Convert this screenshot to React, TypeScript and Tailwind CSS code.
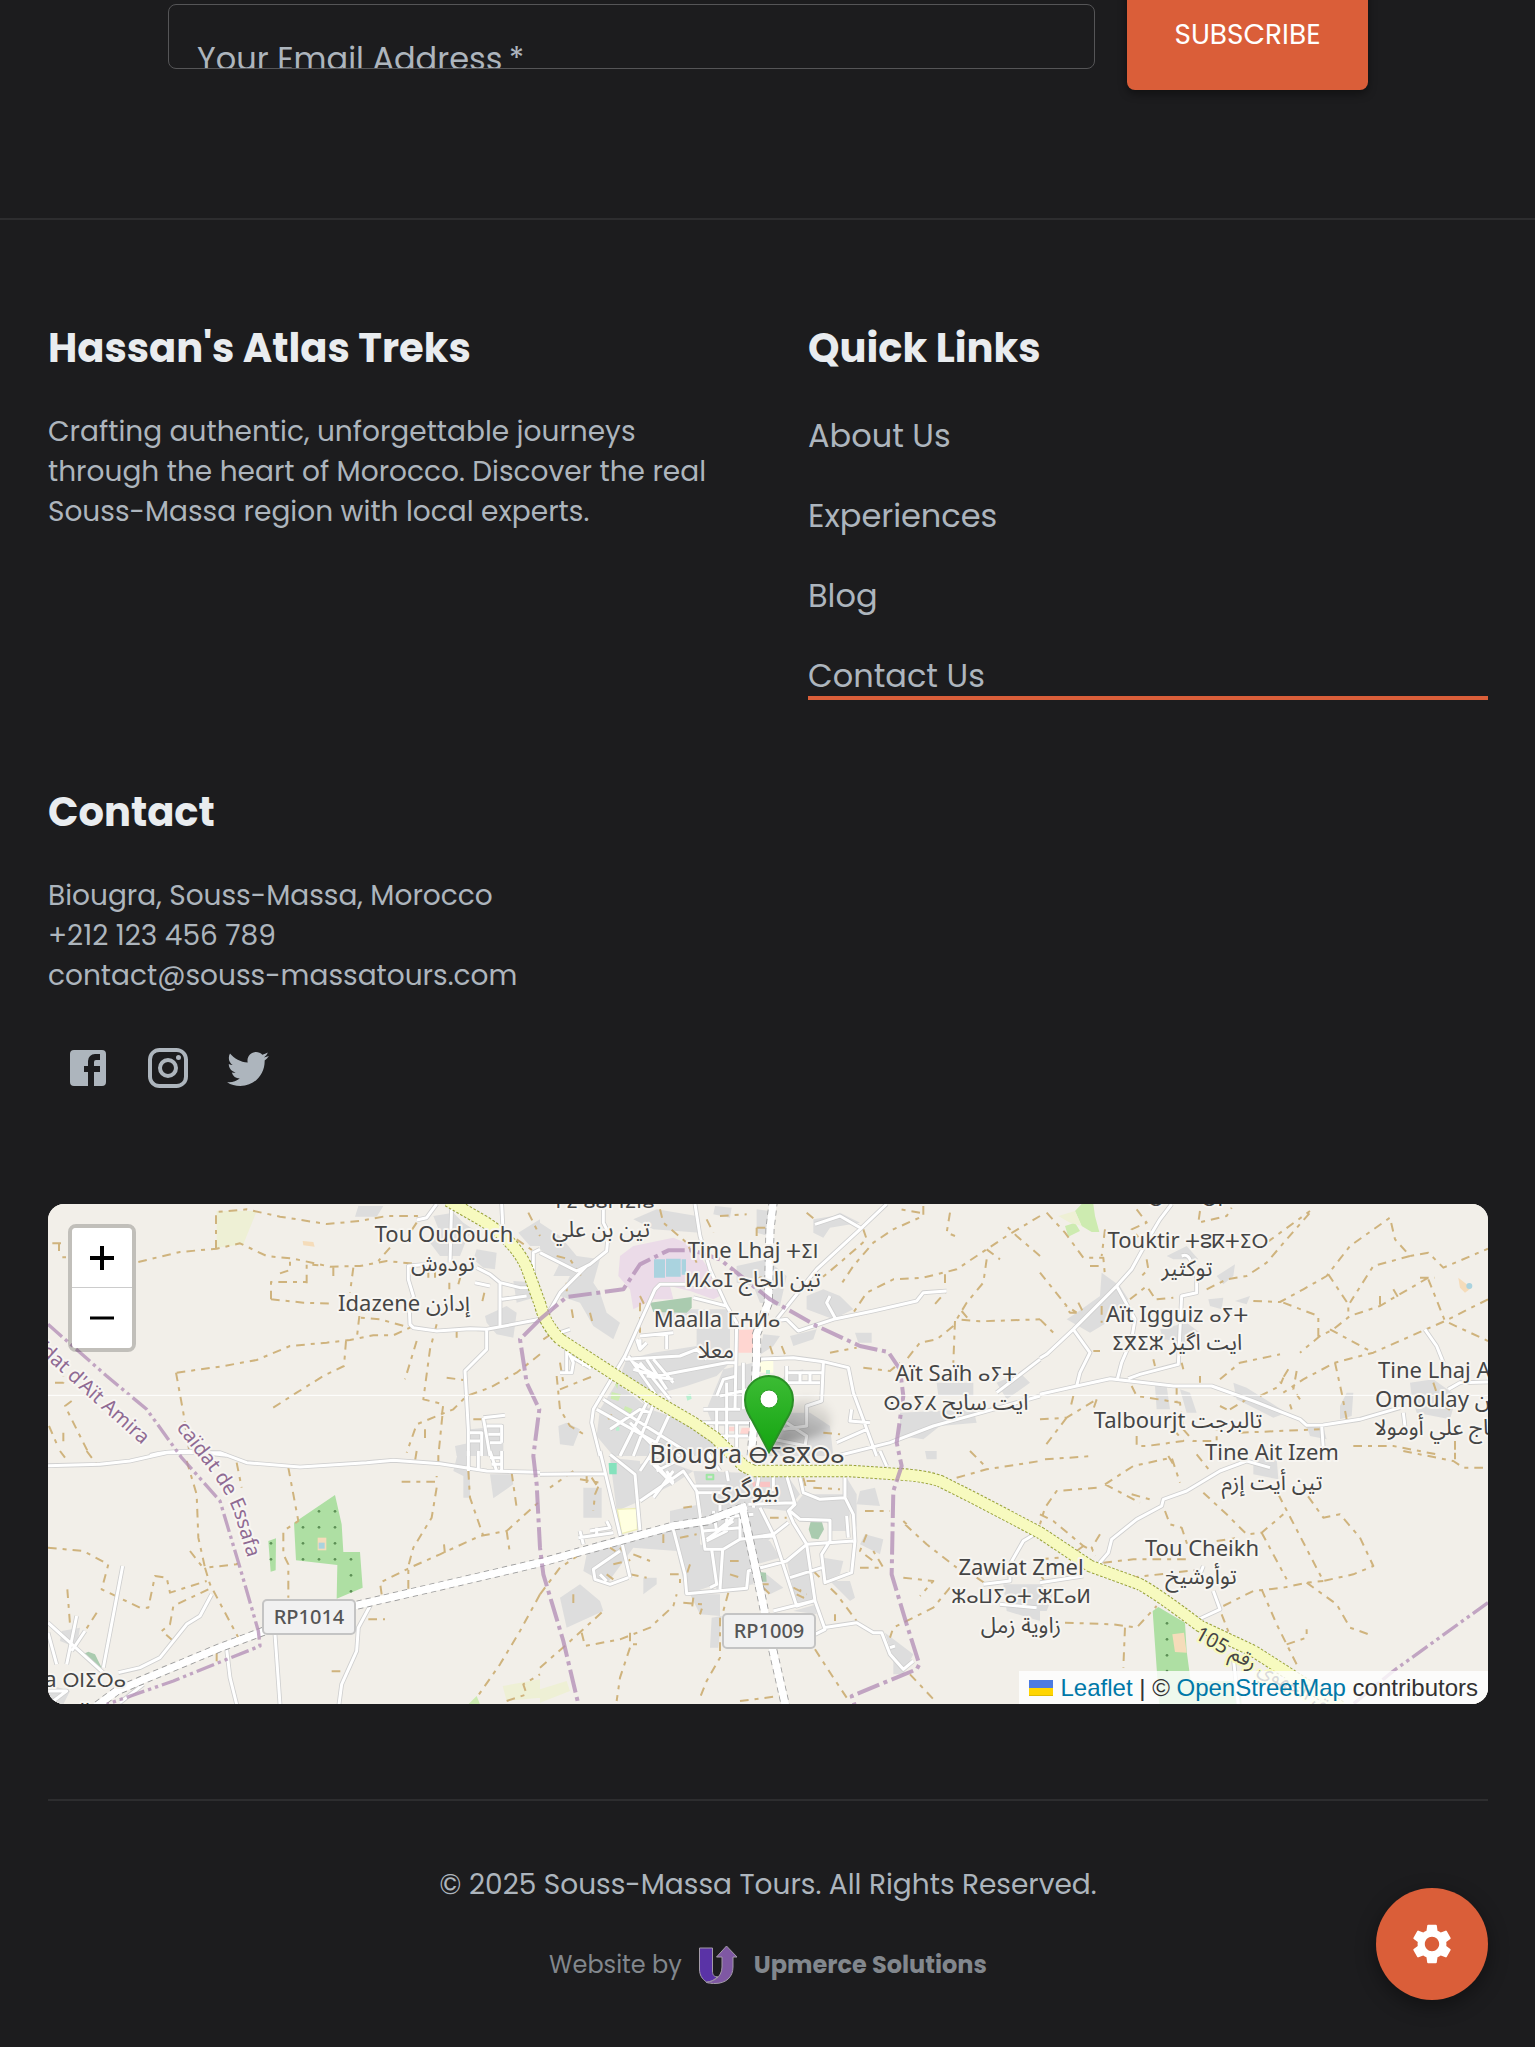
import React from "react";
import { MdSettings } from "react-icons/md";

type Tile = {
  at: string;
  urban: string;
  tracks: string;
  roads: string;
};

/* The drawing grid is three units per map pixel; each tile has its own origin. */
const tiles: Tile[] = [
  {
    at: "translate(-24 -24)",
    urban:
      "M945 62L955 30H1030L1010 62ZM1180 60L1240 50L1270 80L1300 100L1280 130L1260 180L1200 180L1170 140L1200 110ZM1310 160L1370 170L1365 220L1330 215L1300 190ZM1435 110L1500 70V150L1470 150ZM1335 360L1400 330L1430 350L1420 425L1370 415L1340 380ZM1245 750L1290 740V700L1390 690V780H1250ZM1420 255L1500 260V300L1430 320Z",
    tracks:
      "M528 158V48L620 40L720 62L860 84L960 75L1040 60L1140 60M295 198L420 168L530 158L600 142L680 180L760 188L870 212L960 210L1040 195L1140 205M37 142H75M57 142V165M67 184H78M1130 80L1110 110M1050 155L1015 195M720 232L750 222V190M800 262V205L835 208M693 310V258L800 258M693 310L790 320L870 323M880 240V215M940 215L930 290M410 530L540 512L650 492L750 450L860 440L930 432L1000 418H1060L1110 395L1020 370L960 365M958 360L950 430M918 435L912 510L850 540L770 590L695 638M408 530L430 650L450 780M1130 435L1095 550M1190 385L1170 460L1150 610L1210 625L1205 660M1500 475L1430 530L1350 575L1280 600L1240 640L1130 685L1100 770M1220 545L1270 552M1333 290L1325 325M1250 400V425M45 560H70V540M95 615L75 630L145 770M27 690L55 755M70 710V750M1155 700V735M1207 660L1195 780M1300 670H1325M1228 260V280M1262 240L1255 265M1165 225V245M1185 225V245M1465 50L1490 100L1500 120M1430 130L1480 165",
    roads:
      "M1190 24L1160 65L1130 72M1235 24L1230 200M1160 205L1105 210V250L1120 300L1108 340L1110 385L1120 395L1190 405L1290 398L1340 400L1420 385L1500 370M1340 400V460L1275 525L1285 700V780M1310 215L1350 235L1380 260L1440 275H1480M1380 260V390M1305 260L1350 270M1385 310L1460 300M1480 270V170L1500 160M1385 24L1390 120M1330 665L1395 658M1330 665L1350 780M1340 690H1385V740M1290 710H1325V780M1345 715H1380M1350 740H1385M1290 735H1320M330 778Q380 765 450 766L560 778",
  },
  {
    at: "translate(1476 -24)",
    urban:
      "M0 80L60 120L110 180L180 190L160 260L180 290L200 350L240 380L220 430L160 390L120 320L60 300L90 240L40 240L60 200L0 160ZM280 70L350 40L470 60L480 110L340 100ZM525 30L575 35L570 65L520 55ZM650 40L690 45L685 120L650 110ZM590 210L680 190L740 240L720 330L660 320L640 270L590 260ZM820 70L880 60L900 50L960 80L870 95L850 125L820 110ZM800 300L850 280L900 300L940 340L880 370L800 340ZM750 420L830 400L820 430L760 450ZM670 415L720 420L700 450L655 480ZM945 410H995V440H955ZM360 340L570 340V500L530 540L440 570L330 600L240 540L260 490L340 470L470 450V400L350 390ZM180 640L230 560L330 640L480 690L560 740V780H220L170 720ZM55 690L80 680L120 700L100 750L60 745ZM550 520L640 500V690H520L500 640ZM740 530L790 520L780 560L720 560ZM740 650L810 650L870 690L880 780H680L700 700ZM1190 560H1300V600H1195ZM1370 560L1440 530L1470 560L1400 610ZM1080 650L1300 640L1310 680L1200 690L1150 730L1080 720Z",
    tracks:
      "M360 40L370 80L440 140L470 200M50 180L90 190L130 250M80 260V300M95 340L100 370M150 350L160 390M540 60L620 55M650 95H680M650 95V120M800 50L830 75M970 100L980 130L900 200L840 250M1230 50L1220 110L1245 120M1150 30V60L1060 100L1000 140L940 210L900 270M1140 50L1080 40M1500 60L1400 120L1340 160L1250 220L1150 245L1060 250L980 290L940 350M1500 180L1430 120L1400 90M1340 160L1380 190M1340 190L1330 260L1280 320L1250 370L1320 376L1500 370M1215 235V290L1180 330M1265 345L1290 375M1245 375L1240 500M1240 390L1190 430L1140 440L1100 490M870 470L950 455M970 515L1050 525L1080 500M50 540L60 640L90 690L140 720M60 580L160 540M10 430L40 410M60 500L70 560M690 450L700 480M725 450L735 475M300 320V410M205 670L215 655M640 250L680 240M300 300L320 340M770 690L790 720M850 710L900 715M500 70L520 110",
    roads:
      "M0 170L110 225L150 205L200 165L205 110L190 80V24M140 210L60 290L20 360M465 24L480 120L510 220L560 330L590 380L585 640M520 265L360 265L345 280L255 480L160 640L155 680L180 780M460 305L560 330M1040 24L960 100L830 220L710 370M825 85L900 60L960 95M700 375L740 370L775 405L880 370L1000 345L1130 315L1150 290L1220 285M870 300L860 320L885 365M640 490L760 485L850 497L925 515L940 590L1010 780M1500 490L1370 590M1500 600L1360 640L1180 690L1050 740L890 780M850 500L845 615L800 630V690L730 700M745 530H850M780 530V560H840M740 510V580M720 560H840M810 530V560M255 490L420 480L470 460L500 490M265 480L350 600M300 500L390 610M240 540L320 620L240 780M190 610L460 780M350 540L560 500H585M480 680H640M490 640H600M530 640V780M560 560V690M350 600L280 780M400 630L330 780M610 500V640M170 640L420 780M90 400L60 410L100 500L95 530H60M80 440V530M90 480L150 515M150 480V520M130 480V510M300 420L400 410M290 430L300 460M300 430V460L320 440M935 640L930 675L990 680M890 740L980 700M320 490L380 580M340 490L400 560M280 500L350 540L280 520M320 540L400 550M270 680L370 780M210 700L300 640L330 650M530 600L550 550L590 540M480 700L530 720H640M560 690V780M590 680V780M380 410V460M540 600L630 580M740 680L800 720L790 780M700 730L800 750",
  },
  {
    at: "translate(2976 -24)",
    urban:
      "M185 230L240 270L265 310L200 380L150 410L80 370L110 350L180 300ZM380 180L440 150L475 190L400 190ZM530 240L585 205L580 240L550 265ZM505 310L550 305L545 340L510 330ZM585 315L630 300L620 325ZM360 400L440 380L480 410L440 440L370 430ZM345 570H380L390 640H350ZM420 580L450 590L470 650H440ZM580 560L620 575L740 650L700 665L590 610ZM800 690L850 695L860 730L810 720ZM900 630L920 590H940L935 660L900 670ZM1110 560L1180 550L1250 600L1230 670L1130 650L1115 600Z",
    tracks:
      "M20 50L75 110L130 185L190 185L195 240M195 100L185 180M150 210H190M0 230L80 330L110 350M290 40L320 80L275 100L310 140M480 45L475 80L560 60L575 35M680 140L810 45M500 280L560 250L620 240L680 200L740 130L810 50M320 190L325 220L300 245M270 310L320 270L340 300M350 310L400 305M640 315L720 318L790 280L860 240L930 150L1050 65L1065 130L1110 180L1165 170L1210 215L1344 158M1110 180L1000 210L930 320M865 235L925 325V360M1165 245L1070 300L1020 330L930 360L880 400L840 420L780 470M1060 280L1075 305M1020 300V330M1165 250L1215 375L1344 435M1140 245L1185 245M1344 310L1215 375L1000 470L885 500L790 550L730 590M730 320L835 360V430M870 400L990 465M885 500L905 590L920 670M540 550L600 500L720 475M745 520L720 560M770 525L760 580L780 610M480 540V560M110 350H90L75 330M115 320L130 350M185 330V380M0 370L40 410M340 490L345 510M425 500L430 520M0 670L80 665L170 610M80 665L15 750M170 610L160 640M275 570L290 600L420 620L430 700M410 570V620M290 720V750H320L430 735L400 700M430 700L460 735H530V690M600 710L840 700M660 600L720 570L730 545M750 625L755 640M570 640L620 610M540 630L560 640M940 750L1060 750L1190 775M1245 735V780M1180 560L1200 620L1240 650M100 600L90 640M160 465H180",
    roads:
      "M395 24L360 70L330 120L275 220L230 270L100 400L20 475L0 487M230 270L285 370L275 430L245 500L232 550M100 400L150 470L120 530L110 570M0 595L110 570L210 548L400 570H515L640 615L780 670L800 688L850 687L960 670L1080 635M470 230V290L425 300L420 400L415 505L300 535L265 548M425 180Q450 170 455 210M845 687L850 760M1155 400L1190 450L1210 500M1225 580L1260 560L1344 558M1090 650L1095 690",
  },
  {
    at: "translate(-24 741)",
    urban:
      "M1255 0H1290V140H1270V75L1240 60ZM1350 70H1415L1420 100L1360 142ZM65 540L120 530L110 590L60 570ZM24 700L90 720L70 760H24Z",
    tracks:
      "M590 35L605 110M745 50L775 210L730 240V310L745 340V440M440 30L470 130L475 260L495 350L590 340L598 320M495 350L510 400L595 560M450 300L485 345M24 290L130 300L205 340L185 415L300 470H325L345 375L380 380L390 425L500 390M505 415L400 465L390 520L365 540L400 570M82 415L90 520M170 485L135 540M1085 92H1190V75M1190 110L1175 200L1120 290L1105 345V415M1025 430L1020 395L1110 350L1200 310L1320 255L1400 240L1500 150M1285 60L1290 140L1330 255M1415 65L1430 170M1400 240L1408 295M1212 280L1215 310M985 505H1035M875 661H905M1500 430L1440 540L1380 640L1310 740M1400 750L1460 730L1450 700L1500 670M530 605V635M60 0L75 20M140 0L170 40M1130 0L1125 30M1195 15V40",
    roads:
      "M24 44L180 40L270 30L380 5H540L620 35L780 48L980 35L1060 28L1200 38L1340 60L1500 64M248 345L190 650M24 515L190 665M110 495L80 640M135 540L95 600M24 545L50 640M515 430L480 495L440 520L360 620L300 650L235 665M560 595L570 680L590 760M705 550L720 760M990 465L955 530L950 600L905 700L897 760M24 720H80L40 750M310 700L240 755M1285 0V60M1315 0V60M1350 0L1370 60M1385 0V60M1350 20H1385M1355 40H1385",
  },
  {
    at: "translate(1476 741)",
    urban:
      "M210 20L300 30V150L230 180ZM390 180L480 160V280L530 300V400L440 430L410 300L280 290L200 400L130 360L140 310L180 270L390 230ZM300 40L350 20L460 60L400 100L300 150ZM460 60L740 70L780 130L740 180L660 170L700 250L640 330L640 400L530 420L500 290L490 200ZM790 130H915L930 190L920 240L870 240L860 210H780L750 180ZM920 80L950 130V230L920 130ZM740 330L800 290L830 460L770 460ZM640 270L690 270L720 320L650 340ZM850 320L910 330L900 370L855 390ZM760 480L830 460V490ZM960 120L1005 110L1020 165L950 160ZM975 250L1030 265L1020 310L960 280ZM60 440L120 400L180 450L190 480L80 530ZM130 110H185V200H130ZM450 430H540V495L480 490ZM515 500L545 495L535 590H510ZM1035 545L1120 610L1090 670H1060V620ZM870 390H930L945 440L930 450ZM1390 400H1500V510L1400 480ZM310 380H350V400L310 430ZM640 400L680 370L730 410L690 430ZM1155 0H1190V25H1160Z",
    tracks:
      "M120 85L180 95L165 130L160 180M140 70V100M155 80L175 110M100 60L30 110M0 650L80 580L190 480M270 545V580H295M125 545L135 585L240 565L330 530L400 465L410 430M270 590L240 680L230 750M540 500V620L500 690L480 740M825 595L880 680L920 740M600 750L720 735M820 360L890 430L950 510M885 490V510M980 250L960 300L1000 330M960 350H1030L1000 300M975 180H1050M1095 220L1160 280L1250 350M1090 380L1180 390L1140 435M1230 410L1180 470L1060 530L1050 560M1110 670L1190 755M1250 80L1340 55L1500 30M1290 0L1340 50M570 330H600M570 370L600 380M690 200H740M790 80L800 120M820 110L900 115M800 90H840M0 430L60 350L120 310M210 290L240 310M220 340L260 330M280 310L330 330M200 370L220 385M240 290L270 330M270 370L320 380M370 250V290M420 260L470 250M450 340L440 370M390 370H420V400M430 455L490 460L480 490M460 440L455 480M100 430V460M760 410L800 430M770 430L790 440L780 415M565 425L550 480M660 400H690M670 410L690 430M430 170L470 165M1310 380L1340 400M1100 220L1090 210",
    roads:
      "M0 70L195 68M180 0L240 250L270 380M210 10L285 70L300 240M240 300L160 355L165 385L210 400L265 380M300 150L380 95L430 60L470 120L495 295H550L600 265L700 250L745 215M400 235L435 370L440 428L620 412L625 360L740 330L800 280L940 270M515 295L530 400L510 410M548 295L540 415M660 170L700 250L770 465L820 450L700 480M740 75L765 160L745 180L760 215L800 280L825 450L855 535L825 550M780 80L790 125L840 145L915 140V80M915 140L940 190L945 270L935 365L855 395L845 310L870 270V208L780 205L750 180M625 160L760 155M850 530L950 515L1000 545H1025L1050 610L1090 655L1120 630M750 380L845 350M490 240L600 230M520 180L530 240L580 200M380 60L400 95M340 40L380 80M460 105H560M470 125H550M1500 240L1450 270L1410 340M1330 400L1410 390V370M920 195L925 260M1020 0L1040 45M120 240L130 280M150 240L210 230L200 210M115 260L220 245M170 250V230M560 60L565 90M500 0L540 60M1380 460L1490 470M300 60L340 0M340 140L400 60M330 20L400 100M350 60L430 20M430 60L460 105M500 265L580 210M500 270L560 240V200M600 200V265M540 150V200M640 170L660 60M700 70V120M180 370L200 390M490 205L640 190M625 260L700 255M1050 590L1065 585",
  },
  {
    at: "translate(2976 741)",
    urban: "M640 20H710L715 85L640 70ZM0 400L40 430L20 480H0Z",
    tracks:
      "M15 25L160 15M195 100L280 45L395 20L420 95M385 15L400 40M195 100L300 155M275 130L330 145M170 110L50 120L15 170L0 220M0 190L40 210L130 285L160 300M110 300L130 285M180 250L155 290L165 315M375 180L390 220L425 230L445 290M470 10L510 60M490 125L560 190L620 250L665 245L730 190M665 245L740 385M715 130L850 390L940 370L1000 345L960 260L900 190L850 200L800 130M550 465L640 420L730 410L800 395L850 390M800 395L890 460L930 530L1000 555M665 415L710 520L750 600L770 640M740 580L800 560V535M190 335L280 325L440 325M270 380L490 355M75 515L220 520L290 530L350 465M255 530L250 650M545 490L580 580M1090 0L1240 30L1270 50L1330 50M1245 5V25M530 270L600 260M0 325L60 320M0 370L20 400",
    roads:
      "M690 50L620 30L540 60L440 120L370 145L365 165L290 205L215 265L205 305L175 340M130 375L0 395M490 345L480 370M520 420L540 475L465 510M580 620L595 760",
  },
];

const highway =
  "M1200 -10L1306 51Q1400 110 1436 190L1476 300Q1490 360 1536 406L1706 516L1816 586L1936 656L2000 700L2086 785L2116 801H2406L2556 811Q2630 815 2676 831L2776 881L2976 986L3126 1086L3276 1141Q3330 1170 3456 1266L3616 1341L3880 1510";
const secondary =
  "M126 1521L206 1461L276 1431L516 1331L676 1271L916 1206L1156 1151L1476 1076L1876 966L1976 951L2096 906M2176 -10L2166 76L2161 296L2126 390V456L2116 676L2106 800M2081 900L2116 1061L2166 1301L2216 1520";
const townBorder =
  "M1476 346L1416 406L1436 536L1474 616L1456 756L1466 841L1476 1031L1486 1111L1546 1311L1591 1500M1476 346L1556 279L1726 256L1776 181L1861 139H1936L2016 166L2166 286L2306 366L2436 426L2521 444L2556 496L2566 576L2546 716L2561 786L2536 861L2531 1111L2576 1261L2614 1381L2606 1396L2411 1476L2421 1506";
const provinceBorder =
  "M0 361L176 516L296 616L400 760L516 891L576 1091L631 1281L636 1326L376 1431L176 1501M4320 1196L4036 1401L3916 1500";

type Label = { x: number; y: number; t: string; a?: "start" | "middle" | "end" };

const labels: Label[] = [
  { x: 396, y: 38, t: "Tou Oudouch" },
  { x: 395, y: 67, t: "تودوش" },
  { x: 356, y: 107, t: "Idazene إدازن" },
  { x: 555, y: 4, t: "ⵜⵉ ⵓⵓⵏ ⵏⵉⵏⴻ" },
  { x: 553, y: 33, t: "تين بن علي" },
  { x: 705, y: 54, t: "Tine Lhaj ⵜⵉⵏ" },
  { x: 705, y: 83, t: "ⵍⵃⴰⵊ تين الحاج" },
  { x: 669, y: 123, t: "Maalla ⵎⵄⵍⴰ" },
  { x: 668, y: 154, t: "معلا" },
  { x: 908, y: 177, t: "Aït Saïh ⴰⵢⵜ" },
  { x: 908, y: 206, t: "ⵙⴰⵢⵃ ايت سايح" },
  { x: 1108, y: 2, t: "ⵙ" },
  { x: 1164, y: 2, t: "ⵔⵏ" },
  { x: 1140, y: 44, t: "Touktir ⵜⵓⴽⵜⵉⵔ" },
  { x: 1139, y: 72, t: "توكثير" },
  { x: 1129, y: 118, t: "Aït Igguiz ⴰⵢⵜ" },
  { x: 1129, y: 146, t: "ⵉⴳⵉⵣ ايت اگيز" },
  { x: 1130, y: 224, t: "Talbourjt تالبرجت" },
  { x: 1224, y: 256, t: "Tine Ait Izem" },
  { x: 1224, y: 286, t: "تين أيت إزم" },
  { x: 1330, y: 174, t: "Tine Lhaj Ali", a: "start" },
  { x: 1327, y: 203, t: "Omoulay تين", a: "start" },
  { x: 1326, y: 231, t: "الحاج علي أومولا", a: "start" },
  { x: 1154, y: 352, t: "Tou Cheikh" },
  { x: 1153, y: 380, t: "توأوشيخ" },
  { x: 973, y: 371, t: "Zawiat Zmel" },
  { x: 973, y: 399, t: "ⵣⴰⵡⵢⴰⵜ ⵣⵎⴰⵍ" },
  { x: 973, y: 429, t: "زاوية زمل" },
  { x: 78, y: 483, t: "Ouled Mira ⵔⵏⵉⵔⴰ", a: "end" },
  { x: 32, y: 515, t: "ال" },
];

const treeDots = [
  [837, 181], [885, 181], [789, 229], [837, 229], [885, 229], [789, 277], [885, 277],
  [789, 325], [837, 325], [885, 325], [933, 325], [933, 373], [933, 421], [693, 277], [693, 325],
];

/* Tifinagh glyphs are wide in the fallback face, so their runs are set smaller. */
function Bilingual({ text }: { text: string }) {
  return (
    <>
      {text.split(/([\u2D30-\u2D7F]+)/).map((part, i) =>
        i % 2 ? (
          <tspan key={i} className="text-[19px]">
            {part}
          </tspan>
        ) : (
          part
        ),
      )}
    </>
  );
}

function Layer({ pick, className }: { pick: "urban" | "tracks" | "roads"; className: string }) {
  return (
    <g className={className}>
      {tiles.map((t) => (
        <path key={t.at} transform={t.at} d={t[pick]} />
      ))}
    </g>
  );
}

function MapArt() {
  return (
    <svg
      viewBox="0 0 1440 500"
      preserveAspectRatio="xMidYMid slice"
      className="block h-full w-full"
      role="img"
      aria-label="Map of Biougra"
    >
      <defs>
        <linearGradient id="pin" x1="0" y1="0" x2="0" y2="1">
          <stop offset="0" stopColor="#3cbc34" />
          <stop offset="1" stopColor="#14a411" />
        </linearGradient>
        <linearGradient id="shade" x1="0" y1="1" x2="0.6" y2="0">
          <stop offset="0" stopColor="#000" stopOpacity="0.45" />
          <stop offset="1" stopColor="#000" stopOpacity="0.04" />
        </linearGradient>
        <filter id="soft" x="-30%" y="-30%" width="160%" height="160%">
          <feGaussianBlur stdDeviation="4" />
        </filter>
        <path id="essafa" d="M128 224L158 262Q180 290 187 312L202 362" />
      </defs>
      <rect width="1440" height="500" fill="#f2efe9" />
      <g transform="scale(0.33333)" fill="none" strokeLinejoin="round">
        <Layer pick="urban" className="fill-[#dddddd]" />
        <g transform="translate(-24 -24)">
          <path fill="#eef0d5" d="M530 45H650L610 145L530 155Z" />
          <path fill="#f5dcba" d="M788 135L820 138L824 152L790 148Z" />
        </g>
        <g transform="translate(1476 -24)">
          <path fill="#ebdbe8" d="M240 180L280 150L400 125L460 150L500 210L540 300L520 310L450 285L390 270L400 310L340 310L280 340L270 280L235 240Z" />
          <path fill="#aad3df" d="M342 190h33v55h-33zM378 188h44v54h-44zM425 190h13v46h-13z" />
          <path fill="#aacbaf" d="M330 320L455 303V335L440 350L340 348Z" />
          <path fill="#ffd6d1" d="M592 402L658 400L635 470H590ZM555 692H585V706H560ZM605 695H630V715H600Z" />
          <path fill="#ffffe5" d="M655 495H700V530H655Z" />
          <path fill="#cdebb0" d="M215 588L243 595L235 615L212 608ZM225 565L235 560L232 580ZM255 630L278 640L270 655L250 645Z" />
          <path fill="#b8f0cf" d="M438 598L452 594L455 608L442 614ZM678 522H690V534H678ZM228 692H238V704H228Z" />
        </g>
        <g transform="translate(2976 -24)">
          <path fill="#cdebb0" d="M105 45L125 24H160L165 60L178 108H155L125 90ZM75 90L105 80L120 105L85 122Z" />
          <path fill="#eef0d5" d="M55 60L105 45L125 90L90 80Z" />
          <path fill="#f5dcba" d="M1255 245L1280 265L1295 275L1275 290L1260 275Z" />
          <circle fill="#aad3df" cx="1288" cy="270" r="9" />
        </g>
        <g transform="translate(-24 741)">
          <path fill="#aedfa3" d="M885 132L905 220L910 303H960L968 410L890 443L892 342L768 328L762 215ZM685 270L708 262L707 358L692 362Z" />
          {treeDots.map(([x, y]) => (
            <circle key={`${x}-${y}`} cx={x} cy={y} r="4" fill="#5c8f55" />
          ))}
          <path fill="#f5dcba" d="M833 260h26v38h-26z" />
          <path fill="#aad3df" d="M836 275h18v18h-18z" />
          <path fill="#aacbaf" d="M128 610L145 602L165 610L185 650L170 655Z" />
          <path fill="#eef0d5" d="M1388 705L1500 685V740L1400 750ZM1500 715L1580 690L1590 720L1500 755Z" />
          <path fill="#cdebb0" d="M1285 760L1310 735L1320 760Z" />
        </g>
        <g transform="translate(1476 741)">
          <path fill="#ffffe0" stroke="#eeeeb8" strokeWidth="4" d="M232 175L292 172V235L245 248Z" />
          <path fill="#85e2bd" d="M206 36H230V70H208Z" />
          <path fill="#aacbaf" d="M812 212L845 210L852 235L835 265L815 262L806 235ZM655 362L678 365L680 392H660Z" />
          <path fill="#f9c4c4" d="M635 92H690V108H640Z" />
          <path stroke="#9fe6a3" strokeWidth="6" d="M500 71h20v14h-20z" />
        </g>
        <g transform="translate(2976 741)">
          <path fill="#aedfa3" d="M338 480L355 468L435 515L440 600L452 690L600 690L605 765H358Z" />
          <path fill="#f5dcba" d="M397 550L432 545L440 605L405 603Z" />
          {[517, 565, 613, 660].map((y) => (
            <circle key={y} cx="381" cy={y} r="4" fill="#5c8f55" />
          ))}
        </g>
        <Layer pick="tracks" className="stroke-[#cfb37d] stroke-[6] [stroke-dasharray:26_18_12_18]" />
        <Layer pick="roads" className="stroke-[#cfcfcf] stroke-[14]" />
        <Layer pick="roads" className="stroke-white stroke-[9]" />
        <path d={secondary} stroke="#9b9b9b" strokeWidth="27" strokeDasharray="16 12" />
        <path d={secondary} stroke="#fff" strokeWidth="22" />
        <path d={highway} stroke="#9aa33a" strokeWidth="38" strokeDasharray="8 5" />
        <path d={highway} stroke="#f7fabf" strokeWidth="32" />
        <path d={townBorder} stroke="#b08bb4" strokeOpacity="0.75" strokeWidth="12" strokeDasharray="70 14 12 14" />
        <path d={provinceBorder} stroke="#b08bb4" strokeOpacity="0.75" strokeWidth="10" strokeDasharray="56 12 10 12 10 12" />
        <path d="M0 574H4320" stroke="#fff" strokeWidth="3" />
      </g>

      <g className="fill-[#f1f1f1] stroke-[#c4c4c4] stroke-2">
        <rect x="215" y="396" width="92" height="34" rx="4" />
        <rect x="675" y="410" width="92" height="34" rx="4" />
      </g>
      <g className="fill-[#555] text-[20px] font-medium [font-family:'Noto_Sans',sans-serif]" textAnchor="middle">
        <text x="261" y="420">RP1014</text>
        <text x="721" y="434">RP1009</text>
      </g>
      <g
        className="fill-[#454545] stroke-[#f7f5f1] stroke-[4] text-[22px] [font-family:'Noto_Sans','Noto_Sans_Arabic','DejaVu_Sans',sans-serif] [paint-order:stroke]"
        strokeLinejoin="round"
      >
        {labels.map((l) => (
          <text key={`${l.x}-${l.y}`} x={l.x} y={l.y} textAnchor={l.a ?? "middle"}>
            <Bilingual text={l.t} />
          </text>
        ))}
        <g className="text-[25px]" textAnchor="middle">
          <text x="699" y="259">
            Biougra <tspan className="text-[22px]">ⴱⵢⵓⴳⵔⴰ</tspan>
          </text>
          <text x="698" y="293">بيوگرى</text>
        </g>
        <g className="fill-[#8f6a93] text-[20px]">
          <text transform="translate(94 241) rotate(42)" textAnchor="end">
            caïdat d'Aït Amira
          </text>
          <text>
            <textPath href="#essafa">caïdat de Essafa</textPath>
          </text>
        </g>
        <text transform="translate(1146 434) rotate(29)" className="stroke-[#f7fabf] text-[20px]">
          الطريق الجهوي رقم 105
        </text>
      </g>

      <path d="M722 246L738 208Q754 184 776 198Q790 214 776 230Z" fill="url(#shade)" filter="url(#soft)" />
      <path
        d="M721 172C707 172 697 183 697 196C697 205 701 211 705 218L721 248L737 218C741 211 745 205 745 196C745 183 735 172 721 172Z"
        fill="url(#pin)"
        stroke="#2a8f26"
        strokeWidth="2"
      />
      <circle cx="721" cy="195" r="9" fill="#fff" stroke="#2f9c2a" strokeWidth="1" />
    </svg>
  );
}

const social = [
  {
    name: "Facebook",
    d: "M5 3h14a2 2 0 0 1 2 2v14a2 2 0 0 1-2 2H5a2 2 0 0 1-2-2V5a2 2 0 0 1 2-2m13 2h-2.5A3.5 3.5 0 0 0 12 8.5V11h-2v3h2v7h3v-7h3v-3h-3V9a1 1 0 0 1 1-1h2V5z",
  },
  {
    name: "Instagram",
    d: "M7.8 2h8.4C19.4 2 22 4.6 22 7.8v8.4a5.8 5.8 0 0 1-5.8 5.8H7.8C4.6 22 2 19.4 2 16.2V7.8A5.8 5.8 0 0 1 7.8 2m-.2 2A3.6 3.6 0 0 0 4 7.6v8.8C4 18.39 5.61 20 7.6 20h8.8a3.6 3.6 0 0 0 3.6-3.6V7.6C20 5.61 18.39 4 16.4 4H7.6m9.65 1.5a1.25 1.25 0 0 1 1.25 1.25A1.25 1.25 0 0 1 17.25 8 1.25 1.25 0 0 1 16 6.75a1.25 1.25 0 0 1 1.25-1.25M12 7a5 5 0 0 1 5 5 5 5 0 0 1-5 5 5 5 0 0 1-5-5 5 5 0 0 1 5-5m0 2a3 3 0 0 0-3 3 3 3 0 0 0 3 3 3 3 0 0 0 3-3 3 3 0 0 0-3-3z",
  },
  {
    name: "Twitter",
    d: "M22.46 6c-.77.35-1.6.58-2.46.69.88-.53 1.56-1.37 1.88-2.38-.83.5-1.75.85-2.72 1.05C18.37 4.5 17.26 4 16 4c-2.35 0-4.27 1.92-4.27 4.29 0 .34.04.67.11.98C8.28 9.09 5.11 7.38 3 4.79c-.37.63-.58 1.37-.58 2.15 0 1.49.75 2.81 1.91 3.56-.71 0-1.37-.2-1.95-.5v.03c0 2.08 1.48 3.82 3.44 4.21a4.22 4.22 0 0 1-1.93.07 4.28 4.28 0 0 0 4 2.98 8.521 8.521 0 0 1-5.33 1.84c-.34 0-.68-.02-1.02-.06C3.44 20.29 5.7 21 8.12 21 16 21 20.33 14.46 20.33 8.79c0-.19 0-.37-.01-.56.84-.6 1.56-1.36 2.14-2.23z",
  },
];

function Heading({ children }: { children: React.ReactNode }) {
  return <h2 className="mb-[34px] text-[40px] leading-[60px] font-bold text-[#e9ecef]">{children}</h2>;
}

function QuickLink({ label, active }: { label: string; active?: boolean }) {
  return (
    <li className="relative">
      <a href="#" className="block text-[32px] leading-[48px]">
        {label}
      </a>
      {active && <span className="absolute inset-x-0 bottom-0 h-1 bg-[#da5e39]" />}
    </li>
  );
}

function UpmerceLogo() {
  return (
    <svg viewBox="0 0 40 40" className="size-10" aria-hidden="true">
      <path
        d="M28.500 1L39 12H35V22C35 32 28 38.500 17 38.500C13 38.500 9 38 8 37C14 37 24 33 24 22V12H18.500Z"
        fill="#7f58a3"
        stroke="#a49ba9"
        strokeWidth="1"
        strokeLinejoin="round"
      />
      <path
        d="M1.500 3H14.500V26C14.500 30 16 32 19.500 31.500C17 35 12 37 8.500 37C4 34 1.500 30 1.500 24Z"
        fill="#5a33a6"
        stroke="#a49ba9"
        strokeWidth="1"
        strokeLinejoin="round"
      />
    </svg>
  );
}

export default function App() {
  return (
    <div className="min-h-screen overflow-hidden bg-[#1c1c1e] text-[#adb5bd] [font-family:Poppins,Inter,'Open_Sans',sans-serif]">
      <section className="border-b-2 border-[#2d2d2f] pr-[167px] pb-32 pl-[168px]">
        <form className="-mt-5 flex gap-8" onSubmit={(e) => e.preventDefault()}>
          <div className="relative mt-6 h-[65px] grow overflow-hidden rounded-lg border border-[#555557]">
            <input
              id="email"
              type="email"
              required
              className="h-full w-full bg-transparent px-7 text-[32px] outline-none"
            />
            <label htmlFor="email" className="pointer-events-none absolute top-8 left-7 text-[32px] leading-[44px]">
              Your Email Address{"\u2009"}*
            </label>
          </div>
          <button
            type="submit"
            className="h-[110px] w-[241px] rounded-lg bg-[#da5e39] text-[28px] text-white shadow-[0_4px_8px_rgba(0,0,0,0.4)]"
          >
            SUBSCRIBE
          </button>
        </form>
      </section>

      <footer className="pt-[98px] pr-[47px] pb-16 pl-12">
        <div className="grid grid-cols-2 gap-x-20 gap-y-[82px]">
          <section>
            <Heading>Hassan's Atlas Treks</Heading>
            <p className="text-[28px] leading-10">
              Crafting authentic, unforgettable journeys through the heart of Morocco. Discover the real Souss-Massa
              region with local experts.
            </p>
          </section>
          <nav aria-label="Quick links">
            <Heading>Quick Links</Heading>
            <ul className="flex flex-col gap-8">
              <QuickLink label="About Us" />
              <QuickLink label="Experiences" />
              <QuickLink label="Blog" />
              <QuickLink label="Contact Us" active />
            </ul>
          </nav>
          <section>
            <Heading>Contact</Heading>
            <address className="text-[28px] leading-10 not-italic">
              <p>Biougra, Souss-Massa, Morocco</p>
              <p>+212 123 456 789</p>
              <p>contact@souss-massatours.com</p>
            </address>
            <div className="mt-8 flex">
              {social.map((s) => (
                <a key={s.name} href="#" aria-label={s.name} className="p-4">
                  <svg viewBox="0 0 24 24" className="size-12" fill="currentColor" aria-hidden="true">
                    <path d={s.d} />
                  </svg>
                </a>
              ))}
            </div>
          </section>
        </div>

        <div className="relative mt-24 h-[500px] overflow-hidden rounded-2xl bg-[#f2efe9]">
          <MapArt />
          <div className="absolute top-5 left-5 flex flex-col overflow-hidden rounded-lg border-4 border-black/20 bg-clip-padding">
            <button
              type="button"
              aria-label="Zoom in"
              className="grid size-[60px] place-items-center border-b border-[#ccc] bg-white"
            >
              <svg viewBox="0 0 24 24" className="size-6" stroke="#000" strokeWidth="4" aria-hidden="true">
                <path d="M0 12H24M12 0V24" />
              </svg>
            </button>
            <button type="button" aria-label="Zoom out" className="grid size-[60px] place-items-center bg-white">
              <svg viewBox="0 0 24 24" className="size-6" stroke="#000" strokeWidth="3" aria-hidden="true">
                <path d="M0 12H24" />
              </svg>
            </button>
          </div>
          <div className="absolute right-0 bottom-0 flex h-[33px] items-center bg-white/80 px-[10px] text-[24px] text-[#333] [font-family:'Liberation_Sans',sans-serif]">
            <a href="#" className="flex items-center gap-2 text-[#0078a8]">
              <svg viewBox="0 0 24 16" className="h-4 w-6" aria-hidden="true">
                <path fill="#4c7be1" d="M0 0h24v8H0z" />
                <path fill="#ffd500" d="M0 8h24v8H0z" />
                <path fill="#e0bc00" d="M0 15h24v1H0z" />
              </svg>
              Leaflet
            </a>
            <span className="whitespace-pre"> | © </span>
            <a href="#" className="text-[#0078a8]">
              OpenStreetMap
            </a>
            <span className="whitespace-pre"> contributors</span>
          </div>
        </div>

        <div className="mt-[95px] border-t-2 border-[#2d2d2f] pt-16 text-center">
          <p className="text-[28px] leading-10">© 2025 Souss-Massa Tours. All Rights Reserved.</p>
          <div className="mt-10 flex items-center justify-center gap-4 text-[24px] leading-10 text-[#82878d]">
            <span>Website by</span>
            <UpmerceLogo />
            <a href="#" className="font-bold">
              Upmerce Solutions
            </a>
          </div>
        </div>
      </footer>

      <button
        type="button"
        aria-label="Settings"
        className="fixed right-[47px] bottom-[47px] grid size-28 place-items-center rounded-full bg-[#da5e39] text-white shadow-[0_6px_20px_rgba(0,0,0,0.4)]"
      >
        <MdSettings className="size-12" />
      </button>
    </div>
  );
}
